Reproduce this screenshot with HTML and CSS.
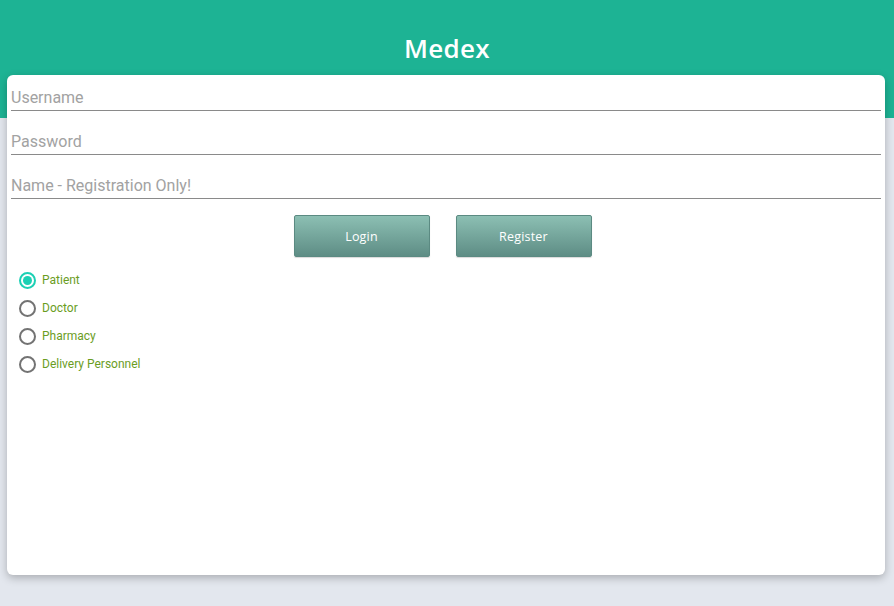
FILE: index.html
```html
<!DOCTYPE html>
<html>
<head>
<meta charset="utf-8">
<link rel="stylesheet" href="styles.css">
</head>
<body>
<div class="header"><h1 class="title">Medex</h1></div>
<div class="card">
  <div class="field"><input class="input" type="text" placeholder="Username"></div>
  <div class="field"><input class="input" type="password" placeholder="Password"></div>
  <div class="field"><input class="input" type="text" placeholder="Name - Registration Only!"></div>
  <div class="buttons">
    <button class="btn">Login</button>
    <button class="btn">Register</button>
  </div>
  <div class="radios">
    <label class="radio"><span class="dot checked"></span><span class="rlabel">Patient</span></label>
    <label class="radio"><span class="dot"></span><span class="rlabel">Doctor</span></label>
    <label class="radio"><span class="dot"></span><span class="rlabel">Pharmacy</span></label>
    <label class="radio"><span class="dot"></span><span class="rlabel">Delivery Personnel</span></label>
  </div>
</div>
</body>
</html>
```
FILE: styles.css
```css
* { box-sizing: border-box; }
html, body { margin: 0; padding: 0; }
body {
  background: #e3e7ee;
  width: 894px;
  height: 606px;
  overflow: hidden;
  font-family: Roboto, "Noto Sans", sans-serif;
}
.header {
  background: #1db394;
  height: 118px;
  display: flex;
  justify-content: center;
  padding-top: 31px;
}
.title {
  margin: 0;
  color: #fff;
  font-family: "Open Sans", sans-serif;
  font-weight: 600;
  font-size: 26px;
  line-height: 34px;
  letter-spacing: 0.3px;
}
.card {
  margin: -43px 9px 0 7px;
  height: 500px;
  background: #fff;
  border-radius: 6px;
  box-shadow: 0 3px 8px rgba(0,0,0,0.25);
  padding: 6px 4px 0 4px;
}
.field {
  height: 44px;
  display: flex;
  align-items: flex-end;
}
.field:first-child { height: 30px; }
.input {
  width: 100%;
  border: none;
  border-bottom: 1px solid #8a8a8a;
  outline: none;
  font-family: Roboto, sans-serif;
  font-size: 16px;
  color: #333;
  padding: 0 0 3px 0;
  background: transparent;
}
.input::placeholder { color: #a2a2a2; }
.buttons {
  display: flex;
  justify-content: center;
  gap: 26px;
  margin-top: 16px;
  padding-right: 7px;
}
.btn {
  width: 136px;
  height: 42px;
  border: 1px solid #5b8a82;
  border-radius: 2px;
  background: linear-gradient(#8cbfb3, #5e8d85);
  color: #fff;
  font-family: "Open Sans", sans-serif;
  font-size: 12.5px;
  letter-spacing: 0.2px;
  box-shadow: 0 1px 1px rgba(0,0,0,0.15);
}
.radios {
  display: flex;
  flex-direction: column;
  gap: 10px;
  margin-top: 14px;
  padding-left: 8px;
}
.radio {
  display: flex;
  align-items: center;
  gap: 6px;
  height: 18px;
}
.dot {
  width: 17px;
  height: 17px;
  border: 2px solid #737373;
  border-radius: 50%;
  display: flex;
  align-items: center;
  justify-content: center;
}
.dot.checked { border-color: #1cd0b4; }
.dot.checked::after {
  content: "";
  width: 9px;
  height: 9px;
  border-radius: 50%;
  background: #1cd0b4;
}
.rlabel {
  font-size: 12px;
  color: #6b9d1f;
}
```
